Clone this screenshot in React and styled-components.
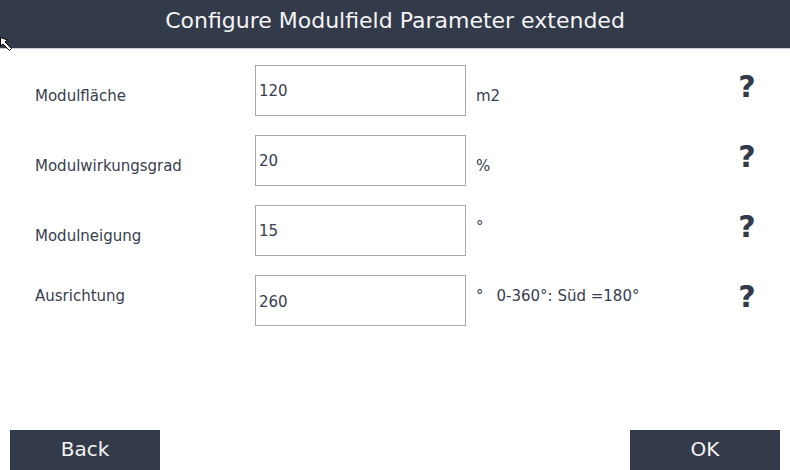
import React from 'react'
import styled, { createGlobalStyle } from 'styled-components'

const Global = createGlobalStyle`
  html, body { margin: 0; padding: 0; background: #fff; }
  body { font-family: "DejaVu Sans", "Liberation Sans", sans-serif; }
`

const Page = styled.div`
  position: relative;
  width: 790px;
  height: 470px;
  display: flex;
  flex-direction: column;
  overflow: hidden;
`

const Header = styled.header`
  box-sizing: border-box;
  height: 49px;
  background: #333a4a;
  border-bottom: 1px solid #cbcbe0;
  color: #f4f4f6;
  font-size: 22px;
  display: flex;
  align-items: center;
  justify-content: center;
  padding-bottom: 7px;
`

const Cursor = styled.svg`
  position: absolute;
  left: 0;
  top: 37px;
  z-index: 2;
`

const Form = styled.div`
  display: flex;
  flex-direction: column;
  gap: 19px;
  padding-top: 16px;
`

const Row = styled.div`
  display: grid;
  grid-template-columns: 220px 211px 1fr 30px;
  padding: 0 28px 0 35px;
  height: 51px;
  color: #383e4e;
  font-size: 15px;
`

const Label = styled.div`
  align-self: center;
  transform: translateY(${p => p.$shift}px);
`

const Field = styled.input`
  box-sizing: border-box;
  width: 211px;
  height: 51px;
  border: 1px solid #a8a8a8;
  padding: 0 0 0 3px;
  margin: 0;
  font: inherit;
  font-size: 15px;
  color: #383e4e;
  outline: none;
  padding-top: ${p => (p.$low ? 2 : 0)}px;
`

const Unit = styled.div`
  align-self: center;
  padding-left: 10px;
  transform: translateY(${p => p.$shift}px);
  white-space: pre;
`

const Hint = styled.span`
  margin-left: 13px;
`

const Help = styled.div`
  font-weight: bold;
  font-size: 30px;
  color: #333a4a;
  text-align: center;
  line-height: 1;
  padding-top: 7px;
`

const Footer = styled.div`
  margin-top: auto;
  display: flex;
  justify-content: space-between;
  padding: 0 10px;
`

const Button = styled.button`
  width: 150px;
  height: 40px;
  border: none;
  background: #333a4a;
  color: #f4f4f6;
  font: inherit;
  font-size: 20px;
  padding: 0 0 2px;
`

const rows = [
  { label: 'Modulfläche', value: '120', unit: 'm2', ls: 5, us: 5 },
  { label: 'Modulwirkungsgrad', value: '20', unit: '%', ls: 5, us: 5 },
  { label: 'Modulneigung', value: '15', unit: '°', ls: 5, us: -4 },
  { label: 'Ausrichtung', value: '260', unit: '°', hint: '0-360°: Süd =180°', ls: -5, us: -5, low: true },
]

export default function App() {
  return (
    <Page>
      <Global />
      <Header>Configure Modulfield Parameter extended</Header>
      <Cursor width="16" height="16" viewBox="0 0 16 16">
        <path d="M0.5 0.5 L0.5 9 L3 7 L9.5 13.5 L11.5 11.5 L5 5 L7.5 3 Z" fill="#fff" stroke="#000" strokeWidth="1" strokeLinejoin="miter" />
      </Cursor>
      <Form>
        {rows.map(r => (
          <Row key={r.label}>
            <Label $shift={r.ls}>{r.label}</Label>
            <Field defaultValue={r.value} $low={r.low} />
            <Unit $shift={r.us}>
              {r.unit}
              {r.hint && <Hint>{r.hint}</Hint>}
            </Unit>
            <Help>?</Help>
          </Row>
        ))}
      </Form>
      <Footer>
        <Button>Back</Button>
        <Button>OK</Button>
      </Footer>
    </Page>
  )
}
